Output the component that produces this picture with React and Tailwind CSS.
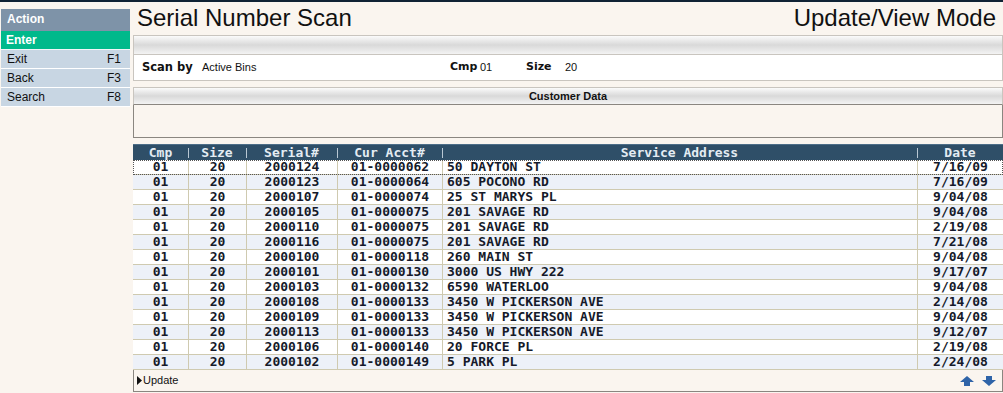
import React from "react";

const rows = [
  ["01", "20", "2000124", "01-0000062", "50 DAYTON ST", "7/16/09"],
  ["01", "20", "2000123", "01-0000064", "605 POCONO RD", "7/16/09"],
  ["01", "20", "2000107", "01-0000074", "25 ST MARYS PL", "9/04/08"],
  ["01", "20", "2000105", "01-0000075", "201 SAVAGE RD", "9/04/08"],
  ["01", "20", "2000110", "01-0000075", "201 SAVAGE RD", "2/19/08"],
  ["01", "20", "2000116", "01-0000075", "201 SAVAGE RD", "7/21/08"],
  ["01", "20", "2000100", "01-0000118", "260 MAIN ST", "9/04/08"],
  ["01", "20", "2000101", "01-0000130", "3000 US HWY 222", "9/17/07"],
  ["01", "20", "2000103", "01-0000132", "6590 WATERLOO", "9/04/08"],
  ["01", "20", "2000108", "01-0000133", "3450 W PICKERSON AVE", "2/14/08"],
  ["01", "20", "2000109", "01-0000133", "3450 W PICKERSON AVE", "9/04/08"],
  ["01", "20", "2000113", "01-0000133", "3450 W PICKERSON AVE", "9/12/07"],
  ["01", "20", "2000106", "01-0000140", "20 FORCE PL", "2/19/08"],
  ["01", "20", "2000102", "01-0000149", "5 PARK PL", "2/24/08"],
];

const headers = ["Cmp", "Size", "Serial#", "Cur Acct#", "Service Address", "Date"];

const gridCols = "grid grid-cols-[55px_58px_91px_105px_475px_1fr]";

const sep =
  "relative before:absolute before:left-0 before:top-[3px] before:h-[10px] before:w-px before:bg-[#b9c8d4] before:content-['']";

const labelFont = { fontFamily: '"DejaVu Sans", Verdana, sans-serif' };

function Sidebar() {
  const items = [
    ["Exit", "F1"],
    ["Back", "F3"],
    ["Search", "F8"],
  ];
  return (
    <div className="w-[130px] pt-[7px] pl-[1px] text-[12px]">
      <div className="h-[22px] bg-[#7e93a8] text-white font-bold pl-[6px] leading-[20px]">Action</div>
      <div className="h-[19px] bg-[#00b98b] text-white font-bold pl-[5px] leading-[18px] border-b border-[#f3f6f9]">Enter</div>
      {items.map(([a, b]) => (
        <div key={a} className="h-[19px] bg-[#c8d6e3] text-[#111] flex justify-between pl-[6px] pr-[9px] leading-[19px] border-b border-white">
          <span>{a}</span>
          <span>{b}</span>
        </div>
      ))}
    </div>
  );
}

export default function App() {
  return (
    <div
      className="w-[1003px] h-[393px] bg-[#faf5ef] border-t-2 border-[#0f2234] flex overflow-hidden"
      style={{ fontFamily: '"Liberation Sans", Arial, sans-serif' }}
    >
      <Sidebar />
      <div className="flex-1 ml-[3px] flex flex-col">
        <div className="h-[33px] flex items-start justify-between pl-[4px] pr-[7px]">
          <div className="text-[24px] leading-[32px] text-[#111]">Serial Number Scan</div>
          <div className="text-[24px] leading-[32px] text-[#111]">Update/View Mode</div>
        </div>
        <div className="h-[20px] border border-[#c9c5bf] bg-gradient-to-b from-[#fbfbfb] via-[#d9d9d9] to-[#f3f3f3]" />
        <div className="h-[26px] bg-white border border-t-0 border-[#c9c5bf] flex items-center text-[#111] whitespace-nowrap">
          <span className="ml-[8px] w-[60px] shrink-0 font-bold text-[11.5px]" style={labelFont}>Scan by</span>
          <span className="w-[248px] shrink-0 text-[11px]">Active Bins</span>
          <span className="w-[30px] shrink-0 font-bold text-[11px]" style={labelFont}>Cmp</span>
          <span className="w-[46px] shrink-0 text-[11px]">01</span>
          <span className="w-[39px] shrink-0 font-bold text-[11px]" style={labelFont}>Size</span>
          <span className="text-[11px]">20</span>
        </div>
        <div className="mt-[6px] h-[18px] border border-[#c9c5bf] border-b-[#8a8680] bg-gradient-to-b from-[#fbfbfb] via-[#d9d9d9] to-[#f3f3f3] text-center text-[11px] font-bold leading-[17px] text-[#111]">
          Customer Data
        </div>
        <div className="h-[33px] border border-t-0 border-[#8a8680]" />
        <div className="mt-[6px] font-bold text-[13px]" style={{ fontFamily: '"DejaVu Sans Mono", "Liberation Mono", monospace' }}>
          <div className={`${gridCols} h-[16px] bg-[#2f4f68] text-[#e4ecf3] leading-[16px] border-t border-[#4d6e88]`}>
            {headers.map((h, i) => (
              <div key={h} className={`text-center ${i > 0 ? sep : ""}`}>{h}</div>
            ))}
          </div>
          {rows.map((r, ri) => (
            <div
              key={ri}
              className={`${gridCols} h-[15px] leading-[14px] text-[#151a2a] border-b border-[#cfcab0] ${ri % 2 === 1 ? "bg-[#edf1f8]" : "bg-white"} ${ri === 0 ? "outline outline-1 outline-dotted outline-[#555] -outline-offset-1" : ""}`}
            >
              {r.map((c, ci) => (
                <div
                  key={ci}
                  className={`${ci === 4 ? "text-left pl-[4px]" : "text-center"} ${ci > 0 ? "border-l border-[#cfcab0]" : ""} whitespace-nowrap overflow-hidden`}
                >
                  {c}
                </div>
              ))}
            </div>
          ))}
        </div>
        <div className="h-[22px] border border-t-0 border-[#8a8680] flex items-center justify-between pl-[3px] pr-[6px]">
          <div className="flex items-center text-[11px] text-[#111]">
            <svg width="5" height="9" viewBox="0 0 5 9" className="mr-[1px]">
              <path d="M0 0 L5 4.5 L0 9 Z" fill="#111" />
            </svg>
            Update
          </div>
          <div className="flex items-center gap-[8px]">
            <svg width="14" height="10" viewBox="0 0 14 10">
              <path d="M7 0 L14 6 L10 6 L10 10 L4 10 L4 6 L0 6 Z" fill="#2f64a8" />
            </svg>
            <svg width="14" height="10" viewBox="0 0 14 10">
              <path d="M4 0 L10 0 L10 4 L14 4 L7 10 L0 4 L4 4 Z" fill="#2f64a8" />
            </svg>
          </div>
        </div>
      </div>
    </div>
  );
}
